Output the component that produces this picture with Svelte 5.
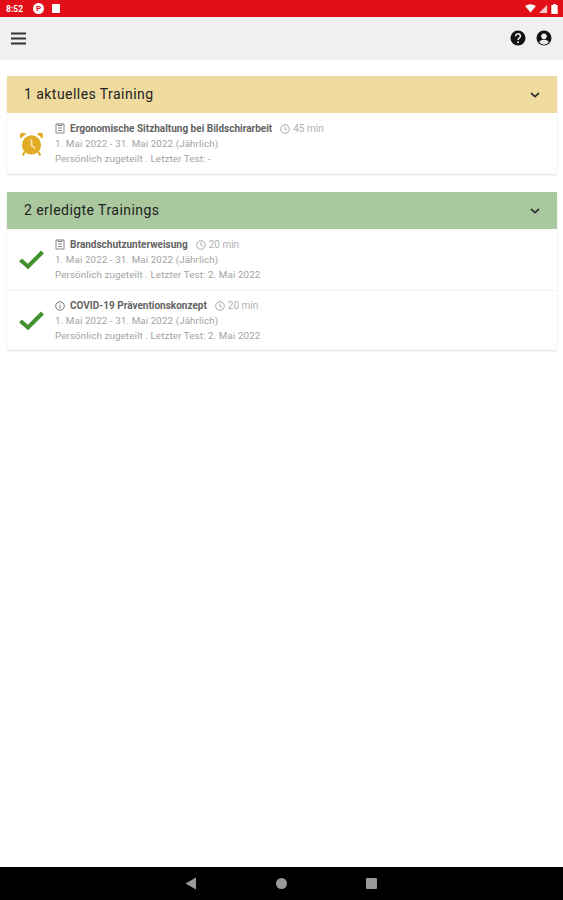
<script lang="ts">
  const groups = [
    {
      title: '1 aktuelles Training',
      tone: 'open',
      items: [
        { name: 'Ergonomische Sitzhaltung bei Bildschirarbeit', kind: 'doc', mins: 45, test: '-' },
      ],
    },
    {
      title: '2 erledigte Trainings',
      tone: 'done',
      items: [
        { name: 'Brandschutzunterweisung', kind: 'doc', mins: 20, test: '2. Mai 2022' },
        { name: 'COVID-19 Präventionskonzept', kind: 'info', mins: 20, test: '2. Mai 2022' },
      ],
    },
  ];
</script>

<div class="screen">
  <div class="status">
    <div class="status-left">
      <span class="time">8:52</span>
      <span class="dot">P</span>
      <span class="note"></span>
    </div>
    <div class="status-right">
      <svg width="11" height="9" viewBox="0 0 12 10"><path d="M0 2.2 Q6 -1.6 12 2.2 L6 9.5Z" fill="#fff"/></svg>
      <svg width="9" height="9" viewBox="0 0 10 10"><path d="M0 10 L9 1 V10Z" fill="#f7c9c9"/></svg>
      <svg width="7" height="10" viewBox="0 0 7 11"><path d="M2 0h3v1h2v10H0V1h2z" fill="#fff"/></svg>
    </div>
  </div>

  <header class="toolbar">
    <svg width="15" height="13" viewBox="0 0 15 13"><path d="M0 1.5h15M0 6.5h15M0 11.5h15" stroke="#333" stroke-width="2.2"/></svg>
    <div class="actions">
      <svg width="16" height="16" viewBox="0 0 16 16">
        <circle cx="8" cy="8" r="7.5" fill="#111"/>
        <path d="M5.6 6.2a2.4 2.4 0 1 1 3.7 2c-.9.6-1.3 1-1.3 1.9" fill="none" stroke="#eee" stroke-width="1.6"/>
        <circle cx="8" cy="12.2" r="1" fill="#eee"/>
      </svg>
      <svg width="16" height="16" viewBox="0 0 16 16">
        <circle cx="8" cy="8" r="7.5" fill="#111"/>
        <circle cx="8" cy="6.2" r="2.8" fill="#eee"/>
        <path d="M3.2 12.3c1-2 2.8-2.6 4.8-2.6s3.8.6 4.8 2.6a6 6 0 0 1-9.6 0z" fill="#eee"/>
      </svg>
    </div>
  </header>

  <main class="content">
    {#each groups as group}
      <section class="card">
        <div class="card-head {group.tone}">
          <span class="head-title">{group.title}</span>
          <svg width="10" height="6" viewBox="0 0 10 6"><path d="M1 1l4 3.6L9 1" fill="none" stroke="#333" stroke-width="1.7"/></svg>
        </div>
        {#each group.items as item}
          <div class="row">
            <div class="state">
              {#if group.tone === 'open'}
                <svg width="25" height="26" viewBox="0 0 26 27">
                  <path d="M1.5 8 L7.5 2.8 Q3 .5 1.2 3.2 Q.6 5.5 1.5 8Z M24.5 8 L18.5 2.8 Q23 .5 24.8 3.2 Q25.4 5.5 24.5 8Z" fill="#e0ac24"/>
                  <path d="M6 21.5 L3.8 25.5 M20 21.5 L22.2 25.5" stroke="#e0ac24" stroke-width="2.2"/>
                  <circle cx="13" cy="14.5" r="10" fill="#e0ac24"/>
                  <path d="M13 8.5V15L17 18" fill="none" stroke="#f6e2ac" stroke-width="1.8"/>
                </svg>
              {:else}
                <svg width="25" height="19" viewBox="0 0 25 19"><path d="M1.5 10 L9 16.5 L23.5 2" fill="none" stroke="#43902f" stroke-width="4"/></svg>
              {/if}
            </div>
            <div class="text">
              <div class="title-line">
                {#if item.kind === 'doc'}
                  <svg width="10" height="11" viewBox="0 0 10 11"><path d="M1 1h8v9H1zM3 .5v2h4v-2M3 5h4M3 7.5h4" fill="none" stroke="#888" stroke-width="1"/></svg>
                {:else}
                  <svg width="10" height="10" viewBox="0 0 10 10"><circle cx="5" cy="5" r="4.3" fill="none" stroke="#777"/><path d="M5 2.6v.9M5 4.4V7.4" stroke="#777"/></svg>
                {/if}
                <strong>{item.name}</strong>
                <span class="dur">
                  <svg width="10" height="10" viewBox="0 0 10 10"><circle cx="5" cy="5" r="4.3" fill="none" stroke="#aaa"/><path d="M5 2.4V5.2L6.8 6.4" fill="none" stroke="#aaa"/></svg>
                  {item.mins} min
                </span>
              </div>
              <div class="meta">1. Mai 2022 - 31. Mai 2022 (Jährlich)</div>
              <div class="meta">Persönlich zugeteilt . Letzter Test: {item.test}</div>
            </div>
          </div>
        {/each}
      </section>
    {/each}
  </main>

  <nav class="navbar">
    <svg width="12" height="13" viewBox="0 0 12 13"><path d="M11 .5V12.5L.5 6.5Z" fill="#9a9a9a"/></svg>
    <span class="home"></span>
    <span class="recent"></span>
  </nav>
</div>

<style>
  :global(body) {
    margin: 0;
    background: #fff;
  }
  .screen {
    width: 563px;
    height: 900px;
    display: flex;
    flex-direction: column;
    font-family: Roboto, "Liberation Sans", sans-serif;
    overflow: hidden;
  }
  .status {
    height: 17px;
    background: #e30f18;
    display: flex;
    align-items: center;
    justify-content: space-between;
    padding: 0 5px 0 6px;
    color: #fff;
  }
  .status-left,
  .status-right {
    display: flex;
    align-items: center;
  }
  .status-left {
    gap: 8px;
  }
  .status-right {
    gap: 3px;
  }
  .time {
    font-size: 8.5px;
    font-weight: 700;
    width: 19px;
  }
  .dot {
    width: 11px;
    height: 11px;
    border-radius: 50%;
    background: #fff;
    color: #e30f18;
    font-size: 8px;
    font-weight: 700;
    line-height: 11px;
    text-align: center;
  }
  .note {
    width: 8px;
    height: 9px;
    background: #fff;
    border-radius: 1px;
  }
  .toolbar {
    box-sizing: border-box;
    height: 43px;
    background: #f0f0f0;
    display: flex;
    align-items: center;
    justify-content: space-between;
    padding: 0 11px 1px;
  }
  .actions {
    display: flex;
    gap: 10px;
  }
  .content {
    flex: 1;
    display: flex;
    flex-direction: column;
    gap: 18px;
    padding: 16px 6px 0 7px;
  }
  .card {
    background: #fff;
    border-radius: 2px;
    box-shadow: 0 1px 2px rgba(0, 0, 0, 0.14);
  }
  .card-head {
    height: 37px;
    display: flex;
    align-items: center;
    justify-content: space-between;
    padding: 0 17px;
    font-size: 14px;
    letter-spacing: 0.45px;
    color: #222;
  }
  .head-title {
    margin-top: -2px;
  }
  .card-head.open {
    background: #efdb9d;
  }
  .card-head.done {
    background: #a9c89e;
  }
  .row {
    height: 61px;
    display: flex;
    align-items: center;
    box-sizing: border-box;
  }
  .row + .row {
    height: 60px;
    border-top: 1px solid #f3f3f3;
  }
  .state {
    width: 48px;
    display: flex;
    justify-content: center;
  }
  .text {
    display: flex;
    flex-direction: column;
    gap: 2.5px;
  }
  .title-line {
    display: flex;
    align-items: center;
    gap: 5px;
    height: 13px;
  }
  .title-line strong {
    font-size: 10px;
    font-weight: 700;
    color: #636363;
  }
  .dur {
    display: flex;
    align-items: center;
    gap: 3px;
    font-size: 10px;
    color: #b0b0b0;
    margin-left: 3px;
  }
  .meta {
    font-size: 9.8px;
    line-height: 12.5px;
    color: #a3a3a3;
    letter-spacing: 0.1px;
  }
  .navbar {
    height: 33px;
    background: #000;
    display: flex;
    align-items: center;
    justify-content: center;
    gap: 79px;
    padding-right: 1px;
  }
  .home {
    width: 11px;
    height: 11px;
    border-radius: 50%;
    background: #9a9a9a;
  }
  .recent {
    width: 11px;
    height: 11px;
    border-radius: 1px;
    background: #9a9a9a;
  }
</style>
